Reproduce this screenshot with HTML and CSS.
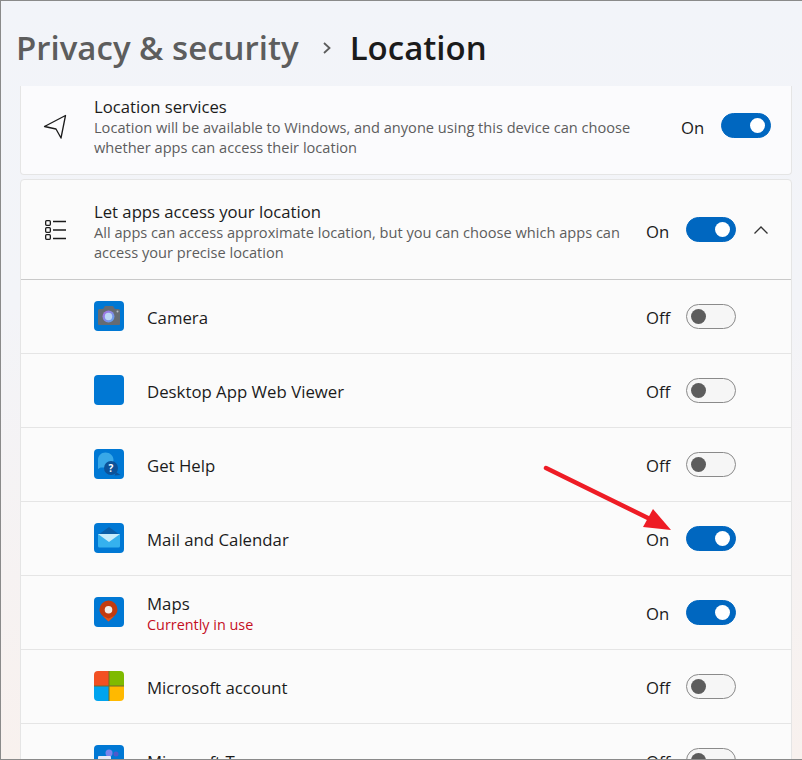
FILE: index.html
```html
<html>
<head>
    <meta charset="UTF-8">
    <meta name="viewport" content="width=device-width, initial-scale=1.0">
    <title>Location</title>
    <link rel="stylesheet" href="styles.css">
</head>
<body>
<div class="window">
    <h1 class="crumbs">
        <span class="crumb-parent">Privacy &amp; security</span>
        <svg class="crumb-sep" width="10" height="14" viewBox="0 0 10 14"><path d="M2 2l5.500 5-5.500 5" fill="none" stroke="#5c5c5c" stroke-width="1.800"/></svg>
        <span class="crumb-current">Location</span>
    </h1>

    <div class="card card-top">
        <svg class="row-icon" width="26" height="26" viewBox="0 0 26 26"><path d="M2.500 13.500L23.500 2.500 19 25 14 16z" fill="none" stroke="#1b1b1b" stroke-width="1.300" stroke-linejoin="round"/></svg>
        <div class="row-text">
            <div class="row-title">Location services</div>
            <div class="row-desc">Location will be available to Windows, and anyone using this device can choose whether apps can access their location</div>
        </div>
        <span class="state">On</span>
        <span class="switch on"></span>
    </div>

    <div class="card card-apps">
        <div class="card-head">
            <svg class="row-icon" width="26" height="26" viewBox="0 0 26 26">
                <g fill="none" stroke="#1b1b1b" stroke-width="1.300">
                    <rect x="3.650" y="3.650" width="4.700" height="4.700" rx="1"/>
                    <rect x="3.650" y="10.650" width="4.700" height="4.700" rx="1"/>
                    <rect x="3.650" y="17.650" width="4.700" height="4.700" rx="1"/>
                    <path d="M11 4.500h13M11 13h13M11 21.500h13"/>
                </g>
            </svg>
            <div class="row-text">
                <div class="row-title">Let apps access your location</div>
                <div class="row-desc">All apps can access approximate location, but you can choose which apps can access your precise location</div>
            </div>
            <span class="state">On</span>
            <span class="switch on"></span>
            <svg class="chevron" width="16" height="10" viewBox="0 0 16 10"><path d="M1.500 8.500L8 2l6.500 6.500" fill="none" stroke="#333" stroke-width="1.300"/></svg>
        </div>

        <div class="app">
            <svg class="app-icon" width="30" height="30" viewBox="0 0 30 30">
                <defs>
                    <linearGradient id="lens" x1="0" y1="0" x2="1" y2="1">
                        <stop offset="0" stop-color="#b06ee0"/>
                        <stop offset="1" stop-color="#5aa8f0"/>
                    </linearGradient>
                </defs>
                <rect width="30" height="30" rx="4" fill="#0078d4"/>
                <path d="M4 9.500a1.500 1.500 0 0 1 1.500-1.500H9l2-3h8l2 3h3.500A1.500 1.500 0 0 1 26 9.500V23a1 1 0 0 1-1 1H5a1 1 0 0 1-1-1z" fill="#656b73"/>
                <circle cx="14.500" cy="15.500" r="6" fill="url(#lens)"/>
                <circle cx="14.500" cy="15.500" r="3.700" fill="#bcd6f6"/>
                <circle cx="23.500" cy="10.500" r="1" fill="#b7bcc4"/>
            </svg>
            <div class="app-name">Camera</div>
            <span class="state">Off</span>
            <span class="switch"></span>
        </div>

        <div class="app">
            <svg class="app-icon" width="30" height="30" viewBox="0 0 30 30"><rect width="30" height="30" rx="4" fill="#0078d4"/></svg>
            <div class="app-name">Desktop App Web Viewer</div>
            <span class="state">Off</span>
            <span class="switch"></span>
        </div>

        <div class="app">
            <svg class="app-icon" width="30" height="30" viewBox="0 0 30 30">
                <rect width="30" height="30" rx="4" fill="#0078d4"/>
                <path d="M11.500 3.500c4.500 0 8 3.300 8 7.500s-3.500 7.500-8 7.500H6.500L4 20v-9c0-4.200 3-7.500 7.500-7.500z" fill="#38a8e8"/>
                <circle cx="17" cy="19" r="7" fill="#0c5299"/>
                <path d="M22 23l4.500 3-6 .500z" fill="#0c5299"/>
                <text x="17" y="22.500" class="help-mark">?</text>
            </svg>
            <div class="app-name">Get Help</div>
            <span class="state">Off</span>
            <span class="switch"></span>
        </div>

        <div class="app">
            <svg class="app-icon" width="30" height="30" viewBox="0 0 30 30">
                <rect width="30" height="30" rx="4" fill="#0078d4"/>
                <path d="M4 12l11-8 11 8z" fill="#0a5ea8"/>
                <path d="M4 11h22v12a1.500 1.500 0 0 1-1.500 1.500h-19A1.500 1.500 0 0 1 4 23z" fill="#35b1ee"/>
                <path d="M4 11h22l-11 8z" fill="#c6ecfb"/>
            </svg>
            <div class="app-name">Mail and Calendar</div>
            <span class="state">On</span>
            <span class="switch on"></span>
        </div>

        <div class="app">
            <svg class="app-icon" width="30" height="30" viewBox="0 0 30 30">
                <rect width="30" height="30" rx="4" fill="#0078d4"/>
                <path d="M14.500 3.500a9 9 0 0 1 9 9c0 3-1.500 4.800-3.300 6.500l-5.700 5.500-5.700-5.500c-1.800-1.700-3.300-3.500-3.300-6.500a9 9 0 0 1 9-9z" fill="#c23b10"/>
                <path d="M8.800 19l5.700 5.500 5.700-5.500-5.700 2.500z" fill="#e2581f"/>
                <circle cx="14.500" cy="12.700" r="3.800" fill="#f2ece8"/>
            </svg>
            <div class="app-text">
                <div class="app-name">Maps</div>
                <div class="app-note">Currently in use</div>
            </div>
            <span class="state">On</span>
            <span class="switch on"></span>
        </div>

        <div class="app">
            <svg class="app-icon" width="30" height="30" viewBox="0 0 30 30">
                <clipPath id="ms-clip"><rect width="30" height="30" rx="4"/></clipPath>
                <g clip-path="url(#ms-clip)">
                    <rect width="15" height="15" fill="#f25022"/>
                    <rect x="15" width="15" height="15" fill="#7fba00"/>
                    <rect y="15" width="15" height="15" fill="#00a4ef"/>
                    <rect x="15" y="15" width="15" height="15" fill="#ffb900"/>
                    <path d="M15 0v30M0 15h30" stroke="#6f6a2c" stroke-width="1"/>
                </g>
            </svg>
            <div class="app-name">Microsoft account</div>
            <span class="state">Off</span>
            <span class="switch"></span>
        </div>

        <div class="app">
            <svg class="app-icon" width="30" height="30" viewBox="0 0 30 30">
                <rect width="30" height="30" rx="4" fill="#0078d4"/>
                <circle cx="15" cy="8" r="3.500" fill="#7b83eb"/>
                <circle cx="22" cy="9" r="2.500" fill="#5059c9"/>
                <rect x="4" y="11" width="13" height="13" rx="1" fill="#e8e8f6"/>
            </svg>
            <div class="app-name">Microsoft Teams</div>
            <span class="state">Off</span>
            <span class="switch"></span>
        </div>
    </div>

    <svg class="arrow" width="135" height="75" viewBox="0 0 135 75">
        <path d="M6 8L112 60" stroke="#ee1c25" stroke-width="4.500" stroke-linecap="round"/>
        <path d="M131 70L113 49 103 67z" fill="#ee1c25"/>
    </svg>
</div>
</body>
</html>
```

FILE: styles.css
```css
:root {
    --accent: #0067c0;
    --text-color: #1b1b1b;
    --text-muted: #5d5d5d;
    --border-color: #e5e5e5;
}

html, body {
    margin: 0;
    padding: 0;
    height: 100%;
    overflow: hidden;
}

body {
    font-family: "Open Sans", "Noto Sans", sans-serif;
    color: var(--text-color);
}

.window {
    position: relative;
    box-sizing: border-box;
    height: 760px;
    overflow: hidden;
    padding: 0 10px 0 19px;
    border: 1px solid #8a8a8a;
    border-right: 0;
    background: linear-gradient(to bottom, #f2f4f9 0, #f3f4f8 40%, #f8f1ee 100%);
}

.crumbs {
    display: flex;
    align-items: center;
    box-sizing: border-box;
    height: 85px;
    padding-top: 8px;
    margin: 0 0 0 -4px;
    font-size: 33px;
    font-weight: 600;
}

.crumb-parent {
    color: #5d5d5d;
}

.crumb-sep {
    margin: 0 18px 0 23px;
}

.card {
    background: #fbfbfd;
    border: 1px solid var(--border-color);
    border-radius: 4px;
}

.card-top {
    display: flex;
    align-items: center;
    box-sizing: border-box;
    height: 89px;
    border-top: 0;
    border-radius: 0 0 4px 4px;
    margin-bottom: 4px;
    padding: 0 20px 9px 0;
}

.card-top .row-text,
.card-top .state {
    margin-top: 3px;
}

.card-head {
    display: flex;
    align-items: center;
    height: 99px;
    border-bottom: 1px solid #c9c9c9;
    padding-right: 20px;
}

.card-head .row-text,
.card-head .state {
    margin-top: 4px;
}

.card-apps {
    background: #fbfbfb;
}

.row-icon {
    flex: none;
    margin: 0 26px 0 21px;
}

.row-text {
    flex: 1;
    min-width: 0;
}

.row-title {
    font-size: 16.7px;
    line-height: 20px;
}

.row-desc {
    font-size: 14.6px;
    line-height: 20px;
    color: var(--text-muted);
}

.state {
    font-size: 16.7px;
    margin-left: 16px;
    width: 40px;
    flex: none;
}

.switch {
    position: relative;
    flex: none;
    box-sizing: border-box;
    width: 50px;
    height: 25px;
    border-radius: 13px;
    border: 1px solid #8a8a8a;
    background: #f6f6f6;
}

.switch::after {
    content: "";
    position: absolute;
    top: 4px;
    left: 4px;
    width: 15px;
    height: 15px;
    border-radius: 50%;
    background: #5d5d5d;
}

.switch.on {
    border-color: var(--accent);
    background: var(--accent);
}

.switch.on::after {
    left: 28px;
    background: #fff;
}

.chevron {
    flex: none;
    margin: 0 2px 0 17px;
}

.app {
    display: flex;
    align-items: center;
    height: 73px;
    border-bottom: 1px solid var(--border-color);
    padding: 0 55px 0 73px;
}

.app-icon {
    flex: none;
    margin: 0 23px 2px 0;
}

.app-name {
    font-size: 16.8px;
    line-height: 20px;
}

.app > .app-name,
.app-text {
    flex: 1;
    margin-top: 2px;
}

.app-text {
    margin-top: 4px;
}

.app .state {
    margin-top: 2px;
}

.app-note {
    font-size: 14.4px;
    line-height: 21px;
    color: #c50f1f;
}

.help-mark {
    font-size: 10px;
    font-weight: 700;
    fill: #fff;
    text-anchor: middle;
}

.arrow {
    position: absolute;
    left: 539px;
    top: 459px;
}
```
